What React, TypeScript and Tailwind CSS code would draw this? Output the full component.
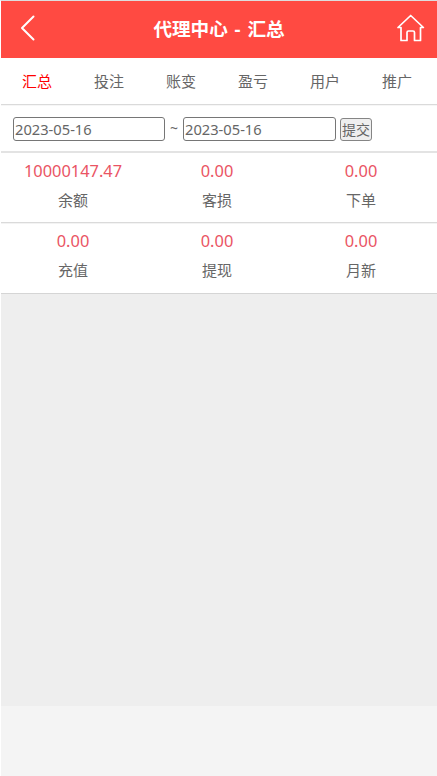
import React from 'react'

const tabs = ['汇总', '投注', '账变', '盈亏', '用户', '推广']

const rows = [
    [
        { value: '10000147.47', label: '余额' },
        { value: '0.00', label: '客损' },
        { value: '0.00', label: '下单' },
    ],
    [
        { value: '0.00', label: '充值' },
        { value: '0.00', label: '提现' },
        { value: '0.00', label: '月新' },
    ],
]

function Header() {
    return (
        <header className="flex h-[57px] items-center justify-between bg-[#ff4a42] pl-[18px] pr-[12px] text-white">
            <button className="mb-[3px]" aria-label="返回">
                <svg width="18" height="28" viewBox="0 0 18 28" fill="none" stroke="currentColor" strokeWidth="2" strokeLinecap="round" strokeLinejoin="round">
                    <path d="M14.500 2.500 3 14 14.500 25.500" />
                </svg>
            </button>
            <h1 className="mb-[2px] pl-[4px] text-[18.6px] font-bold leading-7 [word-spacing:2px]">代理中心 - 汇总</h1>
            <a href="#" aria-label="首页">
                <svg className="mb-[3px]" width="28" height="28" viewBox="0 0 28 28" fill="none" stroke="currentColor" strokeWidth="1.7" strokeLinecap="round" strokeLinejoin="round">
                    <path d="M1 13.500 13.700 1.500 26.400 13.500H23.500V26.500H17.500V18.500Q17.500 17 16 17H11.500Q10 17 10 18.500V26.500H4V13.500Z" />
                </svg>
            </a>
        </header>
    )
}

function App() {
    return (
        <div className="flex h-[776px] w-[437px] flex-col overflow-hidden border-l border-t border-l-white border-t-[#ddd] bg-[#f4f4f4] font-['Noto_Sans','Noto_Sans_CJK_SC',sans-serif] text-[15px] text-[#666]">
            <Header />
            <main className="flex h-[648px] flex-col bg-[#eee]">
                <nav className="h-[47px] border-b border-b-[#dadada] bg-white">
                    <div className="grid h-[46px] w-[432px] grid-cols-6 items-center text-center">
                        {tabs.map((tab, i) => (
                            <a key={tab} href="#" className={i === 0 ? 'text-[#f00]' : ''}>
                                {tab}
                            </a>
                        ))}
                    </div>
                </nav>
                <form className="flex h-[48px] items-start border-b-2 border-t border-b-[#e3e3e3] border-t-[#f6f6f6] bg-white pl-[12px] pt-[11px]">
                    <input className="h-[24px] w-[152px] rounded-[3px] border border-[#767676] px-px text-[14.7px]" defaultValue="2023-05-16" />
                    <span className="w-[18px] text-center text-sm leading-[22px]">~</span>
                    <input className="h-[24px] w-[153px] rounded-[3px] border border-[#767676] px-px text-[14.7px]" defaultValue="2023-05-16" />
                    <button type="button" className="ml-[4px] mt-px flex h-[23px] w-[32px] items-center justify-center rounded-[3px] border border-[#858585] bg-[#efefef] text-[14px]">
                        提交
                    </button>
                </form>
                {rows.map((row, i) => (
                    <section key={i} className={i === 0 ? 'h-[70px] border-b border-b-[#dadada] bg-white' : 'h-[71px] border-b border-t border-b-[#d5d5d5] border-t-[#f3f3f3] bg-white'}>
                        <div className={i === 0 ? 'grid w-[432px] grid-cols-3 pt-[3px] text-center' : 'grid w-[432px] grid-cols-3 pt-[2px] text-center'}>
                            {row.map((item) => (
                                <div key={item.label}>
                                    <p className="text-[16.4px] leading-[30px] text-[#ea5464]">{item.value}</p>
                                    <p className="leading-[29px]">{item.label}</p>
                                </div>
                            ))}
                        </div>
                    </section>
                ))}
            </main>
        </div>
    )
}

export default App
